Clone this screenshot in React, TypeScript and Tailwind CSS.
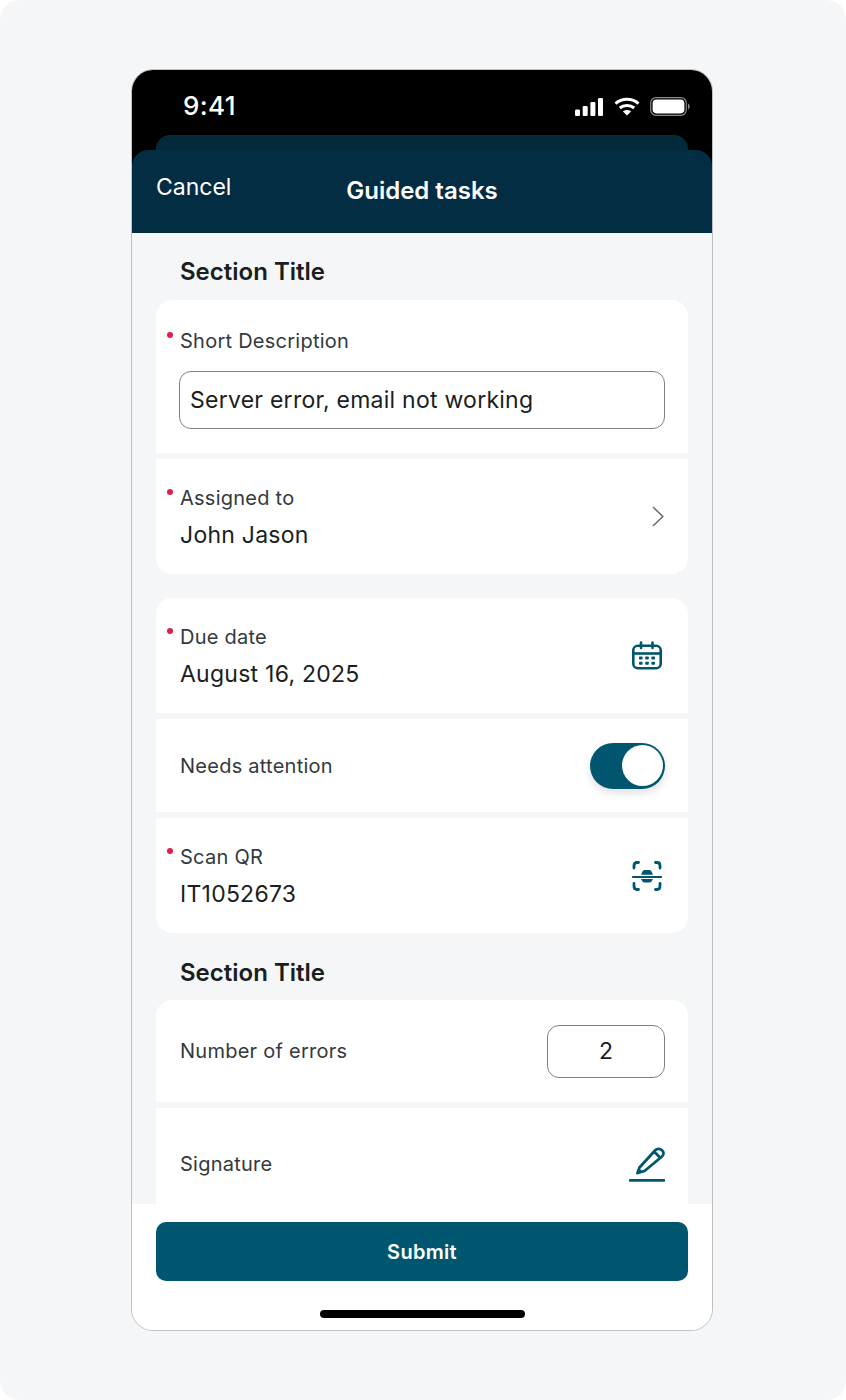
import React from 'react';

const SignalIcon: React.FC = () => (
    <svg width="28" height="18" viewBox="0 0 28 18" fill="white" className="mr-[1px]">
        <rect x="0" y="11.500" width="5" height="6.500" rx="1.200" />
        <rect x="7.700" y="8" width="5" height="10" rx="1.200" />
        <rect x="15.400" y="4" width="5" height="14" rx="1.200" />
        <rect x="23" y="0" width="5" height="18" rx="1.200" />
    </svg>
);

const WifiIcon: React.FC = () => (
    <svg width="26" height="19" viewBox="0 0 26 19" fill="none" stroke="white" strokeWidth="3">
        <path d="M1.500 6.600C7.800 .9 18.200 .9 24.500 6.600" />
        <path d="M5.800 11C9.800 7.500 16.200 7.500 20.200 11" />
        <path d="M13 18.600L8.900 14.600C11.200 12.600 14.800 12.600 17.100 14.600Z" fill="white" stroke="none" />
    </svg>
);

const BatteryIcon: React.FC = () => (
    <svg width="40" height="19" viewBox="0 0 40 19" fill="none">
        <rect x="0.700" y="0.700" width="35.600" height="17.600" rx="5.400" stroke="#8a8a8a" strokeWidth="1.200" />
        <rect x="2.600" y="2.600" width="31.800" height="13.800" rx="3.800" fill="white" />
        <path d="M38 6.500C39 7 39.700 8.200 39.700 9.500S39 12 38 12.500Z" fill="#8a8a8a" />
    </svg>
);

const ChevronIcon: React.FC = () => (
    <svg width="12" height="21" viewBox="0 0 12 21" fill="none" stroke="#6b6f72" strokeWidth="1.600">
        <path d="M1 1L10.800 10.500L1 20" />
    </svg>
);

const CalendarIcon: React.FC = () => (
    <svg width="30" height="30" viewBox="0 0 30 30" fill="none" stroke="#00566e" strokeWidth="2.600">
        <rect x="1.300" y="4.800" width="27.400" height="22.400" rx="4.500" />
        <path d="M1.300 12.500H28.700" />
        <path d="M9 1.500V7M20.500 1.500V7" strokeLinecap="round" />
        <g fill="#00566e" stroke="none">
            <rect x="7" y="15.500" width="3.600" height="3" rx=".8" />
            <rect x="13.200" y="15.500" width="3.600" height="3" rx=".8" />
            <rect x="19.400" y="15.500" width="3.600" height="3" rx=".8" />
            <rect x="7" y="20.800" width="3.600" height="3" rx=".8" />
            <rect x="13.200" y="20.800" width="3.600" height="3" rx=".8" />
            <rect x="19.400" y="20.800" width="3.600" height="3" rx=".8" />
        </g>
    </svg>
);

const ScanIcon: React.FC = () => (
    <svg width="30" height="30" viewBox="0 0 30 30" fill="none" stroke="#00566e" strokeWidth="2.800" strokeLinecap="round">
        <path d="M2 7V4.500Q2 1.500 5 1.500H6.500" />
        <path d="M23.500 1.500H25Q28 1.500 28 4.500V7" />
        <path d="M2 22.500V25Q2 28.500 5 28.500H6.500" />
        <path d="M23.500 28.500H25Q28 28.500 28 25V22.500" />
        <path d="M1 16H29" strokeWidth="2.200" />
        <path d="M9 13.800L10.500 10.500Q11 9 12.500 9H17.500Q19 9 19.500 10.500L21 13.800Z" fill="#00566e" stroke="none" />
        <path d="M9 18L10.500 20.500Q11 21.500 12.500 21.500H17.500Q19 21.500 19.500 20.500L21 18Z" fill="#00566e" stroke="none" />
    </svg>
);

const SignatureIcon: React.FC = () => (
    <svg width="36" height="36" viewBox="0 0 36 36" fill="none" stroke="#00566e" strokeWidth="2.800">
        <path d="M1.200 34.300H35" strokeLinecap="round" />
        <path d="M8.500 27L10.500 21.500L26 4.500C28 2.500 31 2.500 33 4.200C35 6.200 35 8.500 33 10.500L15.500 25Z" strokeLinejoin="round" />
        <path d="M25.500 6L31 11.500" />
        <path d="M7.500 28.500L9.500 22L14.500 26Z" fill="#00566e" stroke="none" />
    </svg>
);

const Dot: React.FC = () => (
    <span className="absolute left-[-13px] top-[3px] h-[6px] w-[6px] rounded-full bg-[#e11d48]" />
);

const Label: React.FC<{ text: string; required?: boolean }> = ({ text, required }) => (
    <div className="relative text-[20px] leading-[24px] tracking-[0.25px] text-[#33393d]">
        {required && <Dot />}
        {text}
    </div>
);

const Value: React.FC<{ text: string }> = ({ text }) => (
    <div className="text-[23px] leading-[30px] tracking-[0.25px] text-[#1a1e21]">{text}</div>
);

const SectionTitle: React.FC<{ text: string }> = ({ text }) => (
    <div className="px-[48px] text-[24px] font-[590] leading-[28px] text-[#1a1e21]">{text}</div>
);

const LabelValue: React.FC<{ label: string; value: string }> = ({ label, value }) => (
    <div className="pt-[3px]">
        <Label text={label} required />
        <div className="mt-[10px]"><Value text={value} /></div>
    </div>
);

const App: React.FC = () => {
    return (
        <div className="h-[1400px] w-[846px] bg-white font-['Inter',sans-serif]">
            <div className="h-full rounded-[20px] bg-[#f4f6f7] pl-[131px] pt-[69px]">
                <div className="flex h-[1262px] w-[582px] flex-col overflow-hidden rounded-[22px] border border-[#bfc1c3] bg-[#f4f6f7]">
                    <div className="bg-black">
                        <div className="flex h-[65px] items-end justify-between pb-[13px] pl-[51px] pr-[22px]">
                            <span className="text-[26px] font-medium leading-[32px] tracking-[0.4px] text-white">9:41</span>
                            <div className="flex items-center gap-[10px] pb-[6px]">
                                <SignalIcon />
                                <WifiIcon />
                                <BatteryIcon />
                            </div>
                        </div>
                        <div className="mx-[24px] h-[15px] rounded-t-[14px] bg-[#04293a]" />
                        <div className="flex h-[83px] rounded-t-[16px] bg-[#022d42] px-[24px]">
                            <div className="w-[150px] pt-[21px] text-[23px] leading-[32px] text-white">Cancel</div>
                            <div className="w-[232px] pt-[26px] text-center text-[24px] font-[590] leading-[30px] text-white">Guided tasks</div>
                        </div>
                    </div>

                    <div className="flex flex-1 flex-col overflow-hidden pt-[25px]">
                        <SectionTitle text="Section Title" />
                        <div className="mx-[24px] mt-[14px] flex flex-col gap-[6px]">
                            <div className="h-[153px] rounded-t-[16px] bg-white px-[24px] pt-[29px]">
                                <Label text="Short Description" required />
                                <div className="mx-[-1px] mt-[18px] flex h-[58px] items-center rounded-[12px] border-[1.5px] border-[#7d8184] px-[10px]">
                                    <Value text="Server error, email not working" />
                                </div>
                            </div>
                            <div className="flex h-[115px] items-center justify-between rounded-b-[16px] bg-white px-[24px]">
                                <LabelValue label="Assigned to" value="John Jason" />
                                <ChevronIcon />
                            </div>
                        </div>

                        <div className="mx-[24px] mt-[24px] flex flex-col gap-[6px]">
                            <div className="flex h-[115px] items-center justify-between rounded-t-[16px] bg-white px-[24px]">
                                <LabelValue label="Due date" value="August 16, 2025" />
                                <div className="mr-[2px]"><CalendarIcon /></div>
                            </div>
                            <div className="flex h-[93px] items-center justify-between bg-white px-[24px]">
                                <Label text="Needs attention" />
                                <div className="mr-[-1px] flex h-[46px] w-[75px] items-center justify-end rounded-full bg-[#00566e] pr-[2px] shadow-[0_4px_8px_rgba(0,0,0,0.12)]">
                                    <div className="h-[41px] w-[41px] rounded-full bg-white" />
                                </div>
                            </div>
                            <div className="flex h-[115px] items-center justify-between rounded-b-[16px] bg-white px-[24px]">
                                <LabelValue label="Scan QR" value="IT1052673" />
                                <div className="mr-[2px]"><ScanIcon /></div>
                            </div>
                        </div>

                        <div className="mt-[26px]"><SectionTitle text="Section Title" /></div>
                        <div className="mx-[24px] mt-[13px] flex flex-col gap-[6px]">
                            <div className="flex h-[102px] items-center justify-between rounded-t-[16px] bg-white px-[24px]">
                                <Label text="Number of errors" />
                                <div className="mr-[-1px] flex h-[53px] w-[118px] items-center justify-center rounded-[12px] border-[1.5px] border-[#7d8184] text-[23px] text-[#1a1e21]">2</div>
                            </div>
                            <div className="flex h-[112px] items-start justify-between bg-white pl-[24px] pr-[23px] pt-[38px]">
                                <div className="pt-[6px]"><Label text="Signature" /></div>
                                <SignatureIcon />
                            </div>
                        </div>
                    </div>

                    <div className="flex h-[126px] flex-col items-center bg-white px-[24px] pt-[18px]">
                        <button className="h-[59px] w-full rounded-[10px] bg-[#00566e] text-[20px] font-[590] tracking-[0.3px] text-white">Submit</button>
                        <div className="mt-[29px] h-[8px] w-[205px] rounded-full bg-black" />
                    </div>
                </div>
            </div>
        </div>
    );
};

export default App;
